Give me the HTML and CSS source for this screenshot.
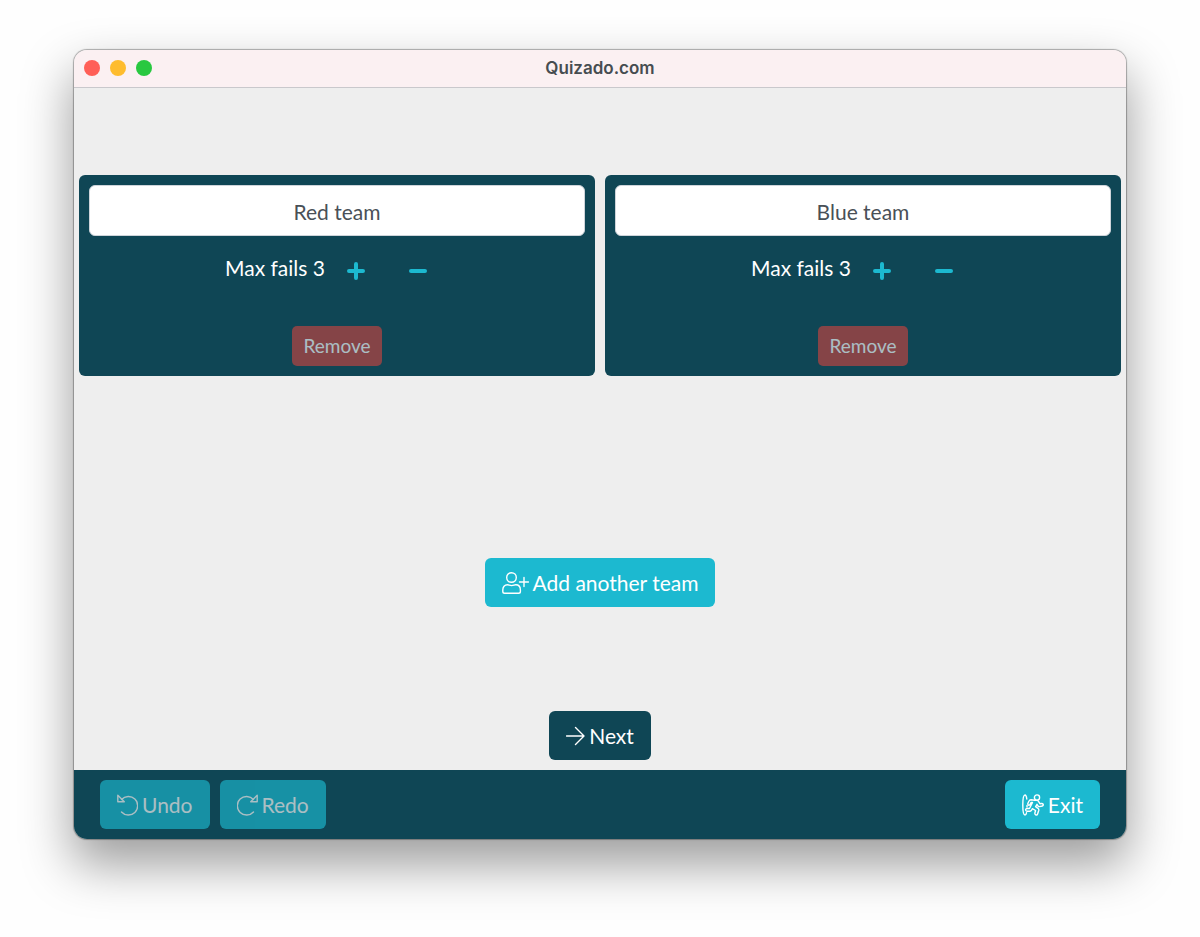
FILE: index.html
```html
<!doctype html>
<html lang="en">
    <head>
        <meta charset="utf-8" />
        <meta name="viewport" content="width=device-width, initial-scale=1" />
        <title>Quizado.com</title>
        <link rel="stylesheet" href="styles.css">
    </head>

    <body>
        <div class="window">
            <header class="titlebar">
                <div class="lights">
                    <span class="light red"></span>
                    <span class="light yellow"></span>
                    <span class="light green"></span>
                </div>
                <h1>Quizado.com</h1>
            </header>

            <main>
                <div class="teams">
                    <section class="team">
                        <input type="text" class="name" aria-label="Team name" value="Red team" />
                        <div class="fails">
                            <span class="fails-label">Max fails 3</span>
                            <button class="step" aria-label="More fails">
                                <svg width="20" height="20" viewBox="0 0 20 20">
                                    <path d="M10 3v14M3 10h14" />
                                </svg>
                            </button>
                            <button class="step" aria-label="Fewer fails">
                                <svg width="20" height="20" viewBox="0 0 20 20">
                                    <path d="M3 10h14" />
                                </svg>
                            </button>
                        </div>
                        <button class="remove" disabled>Remove</button>
                    </section>

                    <section class="team">
                        <input type="text" class="name" aria-label="Team name" value="Blue team" />
                        <div class="fails">
                            <span class="fails-label">Max fails 3</span>
                            <button class="step" aria-label="More fails">
                                <svg width="20" height="20" viewBox="0 0 20 20">
                                    <path d="M10 3v14M3 10h14" />
                                </svg>
                            </button>
                            <button class="step" aria-label="Fewer fails">
                                <svg width="20" height="20" viewBox="0 0 20 20">
                                    <path d="M3 10h14" />
                                </svg>
                            </button>
                        </div>
                        <button class="remove" disabled>Remove</button>
                    </section>
                </div>

                <div class="add">
                    <button class="btn">
                        <svg class="icon" width="27" height="22" viewBox="0 0 27 22">
                            <circle cx="9.5" cy="5.5" r="4.8" />
                            <path d="M5.5 12.8C2.5 12.8 .8 15 .8 18v1.500q0 1.800 1.800 1.800h14q1.800 0 1.800-1.800V18c0-3-1.700-5.200-4.700-5.200-1.600 0-2 .8-4.100.8s-2.500-.8-4.100-.8zM22 5.500v9M17.500 10h9" />
                        </svg>
                        Add another team
                    </button>
                </div>

                <button class="btn dark">
                    <svg class="icon" width="19" height="22" viewBox="0 0 19 22">
                        <path d="M.5 11h17.500M9.500 2.500l8.500 8.500-8.500 8.500" />
                    </svg>
                    Next
                </button>
            </main>

            <footer>
                <button class="btn" disabled>
                    <svg class="icon" width="21" height="22" viewBox="0 0 21 22">
                        <path d="M4.500 5.500A9.300 9.300 0 1 1 4.500 18M.8 1.200v6.500h6.500z" />
                    </svg>
                    Undo
                </button>
                <button class="btn" disabled>
                    <svg class="icon" width="21" height="22" viewBox="0 0 21 22">
                        <path d="M16.500 5.500A9.300 9.300 0 1 0 16.500 18M20.200 1.200v6.500h-6.500z" />
                    </svg>
                    Redo
                </button>
                <button class="btn exit">
                    <svg class="icon" width="22" height="22" viewBox="0 0 22 22">
                        <path d="M4.800 5C4.500 2.500 4 1 3 1 1.800 1 .8 5 .8 11s1 10 2.200 10c.7 0 1.200-.8 1.500-2.200M5 11.500V13" />
                        <circle cx="15" cy="3.500" r="2.600" />
                        <path d="M12.500 6.200L9 5.800Q7.500 5.800 7 7L5.800 9.500Q5.600 11 6.800 11.200 7.800 11.300 8.200 10.300L9 8.500H10.500L7.500 14.500H5Q3.500 14.700 3.600 16 3.800 17.200 5 17.300H8Q9 17.200 9.600 16.200L10.300 14.700 13.600 16.500 12.800 19.300Q12.800 20.700 14 21 15.200 21.200 15.600 20L16.800 16.200Q17 15 16 14.300L13.600 12.700 15 10.300 16 12Q16.500 12.700 17.500 12.600L20.300 12Q21.500 11.500 21.200 10.400 20.700 9.400 19.500 9.500L17.900 9.700 16.500 7.300Q16 6.500 15 6.400z" />
                    </svg>
                    Exit
                </button>
            </footer>
        </div>
    </body>
</html>
```

FILE: styles.css
```css
* {
    box-sizing: border-box;
}
body {
    display: flex;
    min-height: 100vh;
    margin: 0;
    padding: 50px 74px 98px;
    background-color: #fefefe;
    font-family: Lato, "Open Sans", sans-serif;
    font-size: 21px;
    line-height: 32px;
    color: #fff;
}
button,
input {
    font: inherit;
}
.window {
    display: flex;
    flex: 1;
    flex-direction: column;
    overflow: hidden;
    border-radius: 13px;
    background-color: #eee;
    box-shadow:
        0 0 1px 1px rgba(0, 0, 0, 0.3),
        0 24px 50px 2px rgba(0, 0, 0, 0.38);
}

/* title bar */
.titlebar {
    display: grid;
    grid-template-columns: 1fr auto 1fr;
    align-items: center;
    height: 38px;
    padding: 0 10px 1px;
    border-bottom: 1px solid #c9c8cc;
    background-color: #fbf0f2;
}
.titlebar h1 {
    margin: 0;
    font-family: Inter, sans-serif;
    font-size: 17px;
    font-weight: 600;
    line-height: 24px;
    color: #464c50;
}
.lights {
    display: flex;
    gap: 10px;
}
.light {
    width: 16px;
    height: 16px;
    border-radius: 50%;
}
.red {
    background-color: #ff5f57;
}
.yellow {
    background-color: #febc2e;
}
.green {
    background-color: #28c840;
}

/* teams */
main {
    display: flex;
    flex: 1;
    flex-direction: column;
    align-items: center;
    padding: 87px 5px 10px;
}
.teams {
    display: grid;
    grid-template-columns: 1fr 1fr;
    gap: 10px;
    width: 100%;
}
.team {
    display: flex;
    flex-direction: column;
    align-items: center;
    padding: 10px;
    border-radius: 6px;
    background-color: #0f4655;
}
.name {
    width: 100%;
    height: 51px;
    padding: 2px 12px 0;
    border: 1px solid #ced4da;
    border-radius: 6px;
    background-color: #fff;
    text-align: center;
    color: #495057;
}
.fails {
    display: flex;
    align-items: center;
    margin: 11px 0 31px;
}
.fails-label {
    padding-bottom: 6px;
}
.step {
    display: flex;
    align-items: center;
    justify-content: center;
    width: 62px;
    height: 48px;
    padding: 0;
    border: 0;
    background: none;
}
.step svg {
    fill: none;
    stroke: #1cb9d0;
    stroke-width: 4;
    stroke-linecap: round;
}
.remove {
    height: 40px;
    padding: 0 11px;
    border: 0;
    border-radius: 5px;
    background-color: #c44341;
    font-size: 19px;
    color: #fff;
}
.add {
    display: flex;
    flex: 1;
    align-items: center;
    padding-top: 78px;
}

/* buttons */
.btn {
    display: flex;
    align-items: center;
    gap: 4px;
    height: 49px;
    padding: 1px 17px 0;
    border: 0;
    border-radius: 6px;
    background-color: #1cb9d0;
    color: #fff;
}
.dark {
    background-color: #0f4655;
}
.icon {
    margin-top: -1px;
    fill: none;
    stroke: currentColor;
    stroke-width: 1.4px;
    stroke-linejoin: round;
    stroke-linecap: round;
}
button:disabled {
    opacity: 0.65;
}

footer {
    display: flex;
    gap: 10px;
    padding: 10px 26px;
    background-color: #0f4655;
}
.exit {
    margin-left: auto;
}
```
